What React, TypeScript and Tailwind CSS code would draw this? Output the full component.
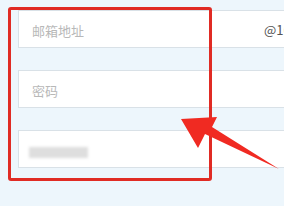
import React from 'react';

const font = { fontFamily: '"Noto Sans CJK SC", "Liberation Sans", sans-serif' };

function Field({ children }: { children?: React.ReactNode }) {
  return (
    <div className="relative h-[38px] w-[280px] shrink-0 bg-white border border-[#d9e1e7] flex items-center pl-[13px]">
      {children}
    </div>
  );
}

export default function App() {
  return (
    <div className="relative w-[284px] h-[206px] overflow-hidden bg-[#edf6fc]" style={font}>
      <div className="flex flex-col gap-[22px] pt-[10px] pl-[18px]">
        <Field>
          <span className="text-[13px] text-[#b8b8b8] mt-[3px]">邮箱地址</span>
          <span className="absolute left-[245px] top-[9px] text-[13px] text-[#555]">@163.com</span>
        </Field>
        <Field>
          <span className="text-[13px] text-[#b8b8b8] mt-[3px]">密码</span>
        </Field>
        <Field>
          <div className="mt-[6px] ml-[-3px] w-[59px] h-[11px] bg-[#dedede] blur-[1.5px]" />
        </Field>
      </div>

      {/* annotation */}
      <div className="absolute left-[8px] top-[7px] w-[204px] h-[174px] border-[3px] border-[#e02b24] rounded-[3px]" />
      <svg className="absolute left-0 top-0" width="284" height="206" viewBox="0 0 284 206">
        <polygon
          points="181,119 217,117 212,127 279,169 205,134 198,148"
          fill="#f02a22"
        />
      </svg>
    </div>
  );
}
